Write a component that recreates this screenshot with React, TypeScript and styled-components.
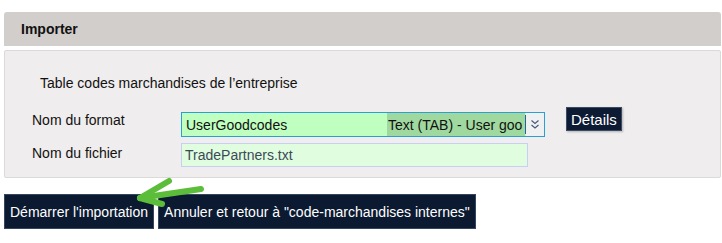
import React from 'react';
import styled, { createGlobalStyle } from 'styled-components';

const GlobalStyle = createGlobalStyle`
  html, body {
    margin: 0;
    padding: 0;
    background: #ffffff;
    font-family: "Liberation Sans", Arial, sans-serif;
  }
`;

const DoubleChevron: React.FC = () => (
  <svg width="10" height="11" viewBox="0 0 10 11" fill="none" stroke="#4a5a78" strokeWidth="1.2">
    <path d="M1.5 1.5 L5 4.5 L8.5 1.5" />
    <path d="M1.5 6 L5 9 L8.5 6" />
  </svg>
);

const GreenArrow: React.FC = () => (
  <svg width="80" height="40" viewBox="0 0 80 40" fill="none" stroke="#5cbd3a" strokeWidth="6" strokeLinecap="round" strokeLinejoin="round">
    <path d="M6 24 L67 15" />
    <path d="M6 24 L35 7" />
    <path d="M6 24 L28 30" />
  </svg>
);

const App: React.FC = () => {
  return (
    <Page>
      <GlobalStyle />
      <SectionHeader>Importer</SectionHeader>
      <Panel>
        <Intro>Table codes marchandises de l’entreprise</Intro>
        <FormGrid>
          <Label>Nom du format</Label>
          <SelectRow>
            <SelectBox>
              <SelectValue>UserGoodcodes</SelectValue>
              <SelectHint>Text (TAB) - User goo</SelectHint>
              <Caret />
              <SelectButton>
                <DoubleChevron />
              </SelectButton>
            </SelectBox>
            <SmallButton>Détails</SmallButton>
          </SelectRow>
          <Label>Nom du fichier</Label>
          <FileInput>TradePartners.txt</FileInput>
        </FormGrid>
      </Panel>
      <ActionBar>
        <ActionButton>Démarrer l'importation</ActionButton>
        <ActionButton>Annuler et retour à "code-marchandises internes"</ActionButton>
        <ArrowMark>
          <GreenArrow />
        </ArrowMark>
      </ActionBar>
    </Page>
  );
};

export default App;

const Page = styled.div`
  width: 722px;
  height: 243px;
  padding: 12px 1px 0 4px;
  box-sizing: border-box;
  overflow: hidden;
  color: #111;
  font-size: 14px;
`;

const SectionHeader = styled.div`
  height: 34px;
  display: flex;
  align-items: center;
  padding-left: 17px;
  background: #d1cecc;
  border-radius: 3px 3px 0 0;
  font-weight: bold;
  font-size: 14px;
  color: #111;
`;

const Panel = styled.div`
  margin-top: 4px;
  height: 128px;
  box-sizing: border-box;
  background: #efeded;
  border: 1px solid #dcdad9;
  border-radius: 2px;
  padding: 23px 0 0 27px;
`;

const Intro = styled.div`
  padding-left: 8px;
  font-size: 14px;
  line-height: 18px;
  color: #111;
`;

const FormGrid = styled.div`
  margin-top: 15px;
  display: grid;
  grid-template-columns: 149px auto;
  row-gap: 6px;
  align-items: center;
`;

const Label = styled.div`
  font-size: 14px;
  color: #111;
  margin-top: -4px;
`;

const SelectRow = styled.div`
  display: flex;
  align-items: flex-start;
  gap: 21px;
`;

const SelectBox = styled.div`
  margin-top: 5px;
  width: 364px;
  height: 25px;
  box-sizing: border-box;
  border: 1px solid #2a9fd4;
  background: #bfffbf;
  display: flex;
  align-items: stretch;
`;

const SelectValue = styled.div`
  flex: 1;
  display: flex;
  align-items: center;
  padding-left: 4px;
  font-size: 14px;
  color: #111;
`;

const SelectHint = styled.div`
  width: 137px;
  display: flex;
  align-items: center;
  padding-left: 1px;
  background: #9fd99f;
  font-size: 14px;
  color: #111;
  white-space: nowrap;
  overflow: hidden;
`;

const Caret = styled.div`
  width: 1px;
  margin: 2px 0;
  background: #2a5fa0;
`;

const SelectButton = styled.div`
  width: 18px;
  background: #eef0f2;
  display: flex;
  align-items: center;
  justify-content: center;
`;

const SmallButton = styled.div`
  height: 24px;
  box-sizing: border-box;
  padding: 0 4px;
  display: flex;
  align-items: center;
  background: #0c1a33;
  border: 1px solid #3c4b63;
  box-shadow: 1px 1px 2px rgba(0, 0, 0, 0.25);
  color: #fff;
  font-size: 15px;
`;

const FileInput = styled.div`
  width: 347px;
  height: 24px;
  box-sizing: border-box;
  border: 1px solid #c8cff2;
  background: #e0fde0;
  display: flex;
  align-items: center;
  padding-left: 3px;
  font-size: 14px;
  color: #3c4a58;
`;

const ActionBar = styled.div`
  position: relative;
  margin-top: 16px;
  display: flex;
  gap: 4px;
`;

const ActionButton = styled.div`
  height: 35px;
  box-sizing: border-box;
  padding: 0 5px;
  display: flex;
  align-items: center;
  background: #0b1a31;
  border: 1px solid #34455e;
  color: #fff;
  font-size: 14px;
  white-space: nowrap;
`;

const ArrowMark = styled.div`
  position: absolute;
  left: 130px;
  top: -20px;
  line-height: 0;
  pointer-events: none;
`;
